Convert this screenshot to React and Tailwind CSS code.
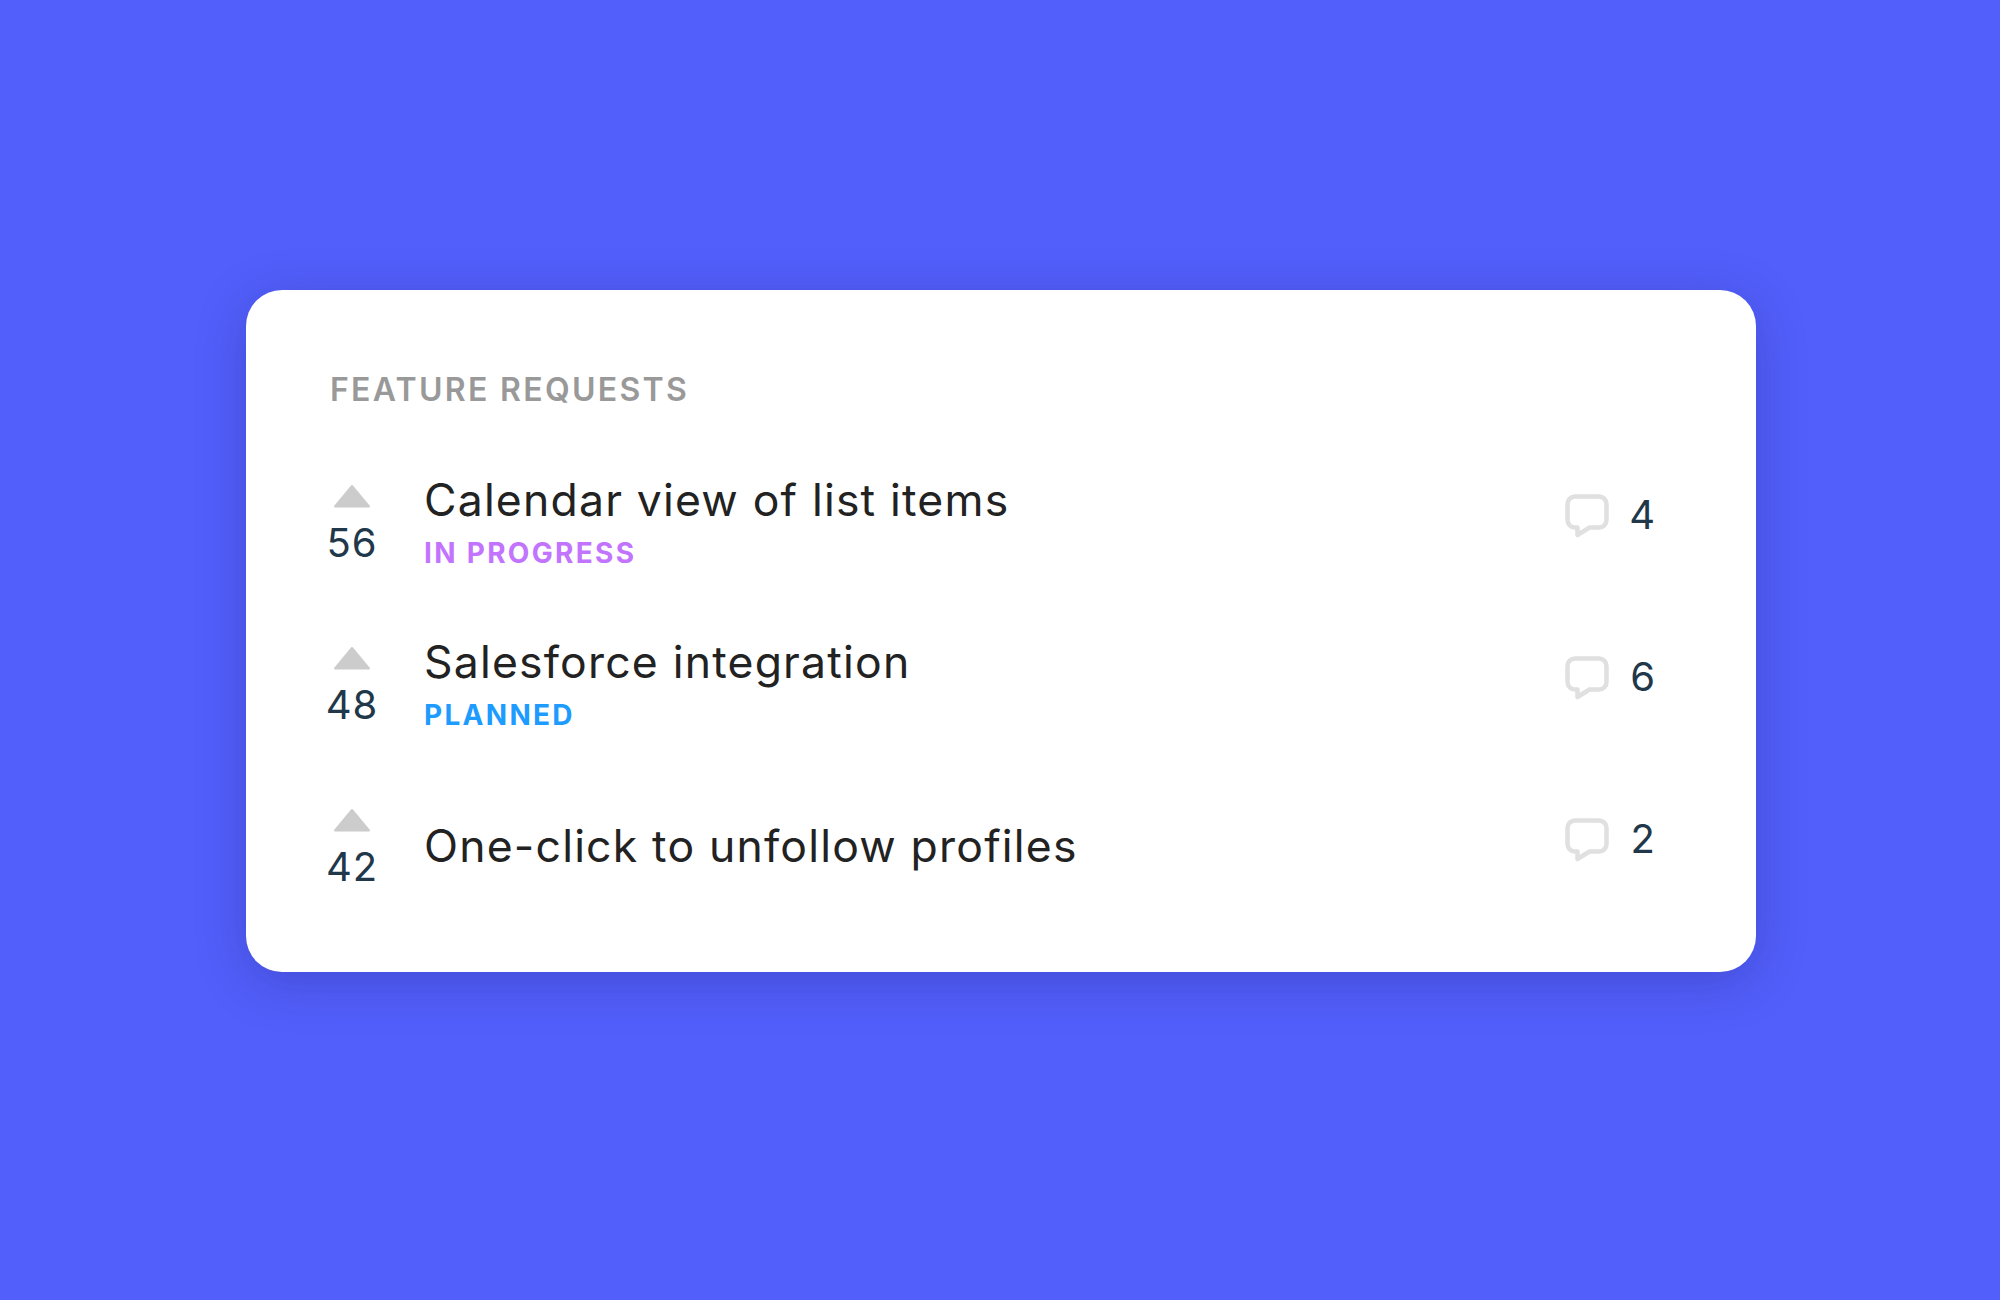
const items = [
  { votes: 56, title: "Calendar view of list items", status: "IN PROGRESS", color: "text-[#c274ff]", comments: 4 },
  { votes: 48, title: "Salesforce integration", status: "PLANNED", color: "text-[#1d9bff]", comments: 6 },
  { votes: 42, title: "One-click to unfollow profiles", comments: 2 },
];

function Arrow() {
  return (
    <svg width="38" height="24" viewBox="0 0 38 24" className="block">
      <path d="M19 2 L36 22.5 H2 Z" fill="#cccccc" stroke="#cccccc" strokeWidth="2" strokeLinejoin="round" />
    </svg>
  );
}

function Bubble() {
  return (
    <svg width="44" height="44" viewBox="0 0 44 44" fill="none" className="mt-[2px] block">
      <path
        d="M10 2.5 H34 A7.5 7.5 0 0 1 41.5 10 V26 A7.5 7.5 0 0 1 34 33.5 H24.5 L12.5 41 V33.5 H10 A7.5 7.5 0 0 1 2.5 26 V10 A7.5 7.5 0 0 1 10 2.5 Z"
        stroke="#e0e0e0"
        strokeWidth="4.5"
        strokeLinejoin="round"
      />
    </svg>
  );
}

export default function App() {
  return (
    <div className="min-h-[1300px] bg-[#525ffa] pl-[246px] pt-[290px] font-['Inter',sans-serif]">
      <div className="h-[682px] w-[1510px] rounded-[36px] bg-white pl-[84px] pr-[101px] pt-[81px] shadow-[0_10px_50px_rgba(30,30,120,0.28)]">
        <div className="text-[32px] font-semibold leading-[38px] tracking-[2.3px] text-[#999999]">FEATURE REQUESTS</div>
        <div className="mt-[75px]">
          {items.map((it) => (
            <div key={it.votes} className="flex h-[162px] items-start">
              <div className="flex w-[44px] flex-col items-center">
                <Arrow />
                <div className="mt-[10px] text-[40px] leading-[50px] tracking-[1px] text-[#20384a]">{it.votes}</div>
              </div>
              <div className={`ml-[50px] flex-1 ${it.status ? "mt-[-12px]" : "mt-[10px]"}`}>
                <div className="text-[44.5px] leading-[56px] tracking-[1.2px] text-[#222222]">{it.title}</div>
                {it.status && (
                  <div className={`mt-[7px] text-[28px] font-bold leading-[36px] tracking-[2.3px] ${it.color}`}>{it.status}</div>
                )}
              </div>
              <div className="mt-[8px] flex items-center">
                <Bubble />
                <div className="ml-[20px] w-[26px] text-right text-[40px] leading-[44px] text-[#20384a]">{it.comments}</div>
              </div>
            </div>
          ))}
        </div>
      </div>
    </div>
  );
}
